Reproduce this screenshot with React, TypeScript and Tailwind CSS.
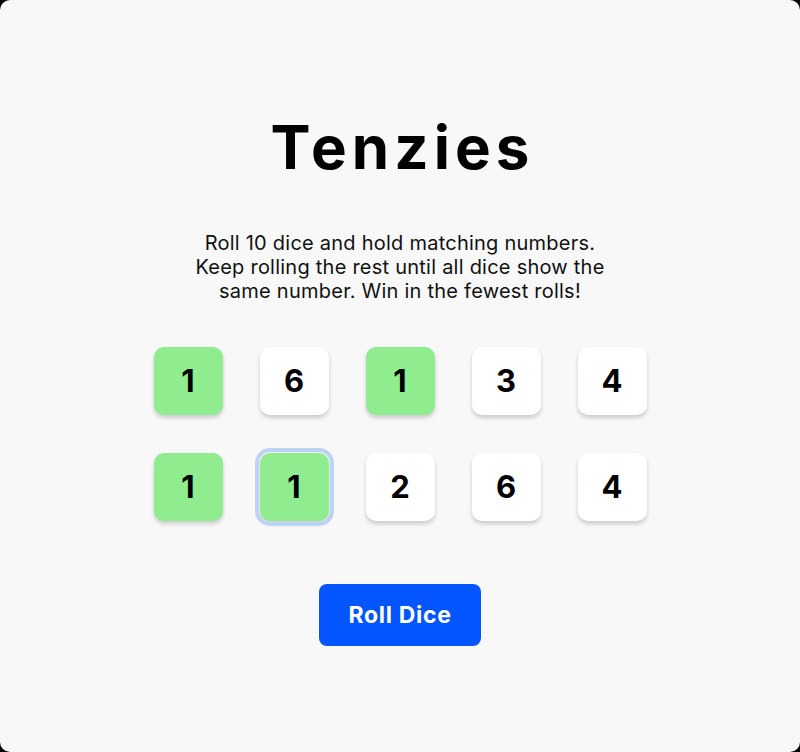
import React from 'react';

const dice = [
  { value: 1, held: true },
  { value: 6, held: false },
  { value: 1, held: true },
  { value: 3, held: false },
  { value: 4, held: false },
  { value: 1, held: true },
  { value: 1, held: true, focused: true },
  { value: 2, held: false },
  { value: 6, held: false },
  { value: 4, held: false },
];

const Die: React.FC<{ value: number; held: boolean; focused?: boolean }> = ({ value, held, focused }) => (
  <button
    className={`w-[69px] h-[68px] rounded-[10px] flex items-center justify-center text-[31px] font-bold text-black shadow-[0_3px_4px_rgba(0,0,0,0.18)] ${
      held ? 'bg-[#8fec8f]' : 'bg-white'
    } ${focused ? 'outline-4 outline-offset-1 outline-[#bcd3f6]' : ''}`}
    style={{ fontFamily: 'Inter, "Noto Sans", sans-serif' }}
  >
    {value}
  </button>
);

export default function App() {
  return (
    <div className="w-[800px] h-[752px] bg-black">
      <main
        className="w-full h-full rounded-[10px] bg-[#f8f8f8] flex flex-col items-center pt-[112px]"
        style={{ fontFamily: 'Inter, "Noto Sans", sans-serif' }}
      >
        <h1 className="text-[60px] leading-[70px] font-bold tracking-[0.085em] text-black pl-[5px]">Tenzies</h1>
        <p className="mt-[49px] text-center text-[20px] leading-[24px] text-[#111] tracking-[0.012em]">
          Roll 10 dice and hold matching numbers.
          <br />
          Keep rolling the rest until all dice show the
          <br />
          same number. Win in the fewest rolls!
        </p>
        <div className="mt-[44px] grid grid-cols-5 gap-x-[37px] gap-y-[38px]">
          {dice.map((d, i) => (
            <Die key={i} value={d.value} held={d.held} focused={d.focused} />
          ))}
        </div>
        <button className="mt-[63px] w-[162px] h-[62px] rounded-[8px] bg-[#0356ff] text-white text-[23px] font-bold tracking-[0.03em]">
          Roll Dice
        </button>
      </main>
    </div>
  );
}
